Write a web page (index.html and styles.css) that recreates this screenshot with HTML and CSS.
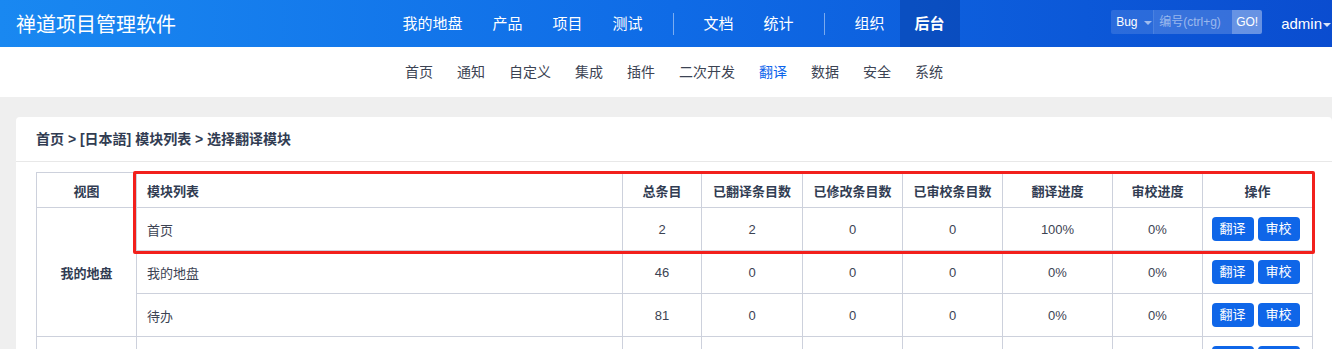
FILE: index.html
```html
<!DOCTYPE html>
<html lang="zh-CN">
<head>
  <meta charset="UTF-8" />
  <meta name="viewport" content="width=device-width, initial-scale=1.0"/>
  <title>翻译 - 禅道项目管理软件</title>
  <link rel="stylesheet" href="styles.css">
</head>
<body>
  <header class="topbar">
    <div class="logo">禅道项目管理软件</div>
    <nav class="mainnav">
      <a href="#">我的地盘</a>
      <a href="#">产品</a>
      <a href="#">项目</a>
      <a href="#">测试</a>
      <span class="divider"></span>
      <a href="#">文档</a>
      <a href="#">统计</a>
      <span class="divider"></span>
      <a href="#">组织</a>
      <a href="#" class="active">后台</a>
    </nav>
    <div class="userbar">
      <div class="search">
        <span class="search-type">Bug<i class="caret"></i></span>
        <span class="search-input">编号(ctrl+g)</span>
        <span class="search-go">GO!</span>
      </div>
      <span class="user">admin<i class="caret"></i></span>
    </div>
  </header>

  <nav class="subnav">
    <a href="#">首页</a>
    <a href="#">通知</a>
    <a href="#">自定义</a>
    <a href="#">集成</a>
    <a href="#">插件</a>
    <a href="#">二次开发</a>
    <a href="#" class="active">翻译</a>
    <a href="#">数据</a>
    <a href="#">安全</a>
    <a href="#">系统</a>
  </nav>

  <main class="content">
    <div class="panel">
      <div class="panel-heading">首页 &gt; [日本語] 模块列表 &gt; 选择翻译模块</div>
      <div class="panel-body">
        <table class="grid">
          <colgroup>
            <col style="width:100px">
            <col style="width:486px">
            <col style="width:79px">
            <col style="width:101px">
            <col style="width:100px">
            <col style="width:100px">
            <col style="width:110px">
            <col style="width:90px">
            <col style="width:110px">
          </colgroup>
          <thead>
            <tr>
              <th>视图</th>
              <th class="left">模块列表</th>
              <th>总条目</th>
              <th>已翻译条目数</th>
              <th>已修改条目数</th>
              <th>已审校条目数</th>
              <th>翻译进度</th>
              <th>审校进度</th>
              <th>操作</th>
            </tr>
          </thead>
          <tbody>
            <tr>
              <th rowspan="3">我的地盘</th>
              <td class="left">首页</td>
              <td>2</td><td>2</td><td>0</td><td>0</td><td>100%</td><td>0%</td>
              <td class="actions"><a href="#" class="btn">翻译</a><a href="#" class="btn">审校</a></td>
            </tr>
            <tr>
              <td class="left">我的地盘</td>
              <td>46</td><td>0</td><td>0</td><td>0</td><td>0%</td><td>0%</td>
              <td class="actions"><a href="#" class="btn">翻译</a><a href="#" class="btn">审校</a></td>
            </tr>
            <tr>
              <td class="left">待办</td>
              <td>81</td><td>0</td><td>0</td><td>0</td><td>0%</td><td>0%</td>
              <td class="actions"><a href="#" class="btn">翻译</a><a href="#" class="btn">审校</a></td>
            </tr>
            <tr>
              <th>产品</th>
              <td class="left">产品</td>
              <td>120</td><td>0</td><td>0</td><td>0</td><td>0%</td><td>0%</td>
              <td class="actions"><a href="#" class="btn">翻译</a><a href="#" class="btn">审校</a></td>
            </tr>
          </tbody>
        </table>
      </div>
    </div>
  </main>

  <div class="highlight"></div>
</body>
</html>
```

FILE: styles.css
```css
html {
  overflow: hidden;
}

body {
  position: relative;
  width: 1348px;
  margin: 0;
  background: #efefef;
  color: #3c4353;
  font-family: "Liberation Sans", "Noto Sans CJK SC", sans-serif;
  font-size: 13px;
}

a {
  text-decoration: none;
  color: inherit;
}

/* top bar */
.topbar {
  display: flex;
  align-items: center;
  height: 47px;
  background: linear-gradient(90deg, #1988f1 0%, #0f6be6 50%, #0a4ccf 100%);
  color: #fff;
}

.logo {
  flex: 1 1 0;
  padding-left: 16px;
  font-size: 20px;
  white-space: nowrap;
}

.mainnav {
  display: flex;
  align-items: center;
  height: 47px;
}

.mainnav a {
  padding: 0 15px;
  line-height: 47px;
  font-size: 15px;
}

.mainnav a.active {
  background: rgba(0, 20, 90, 0.22);
  font-weight: bold;
}

.mainnav .divider {
  width: 1px;
  height: 22px;
  margin: 0 15px;
  background: rgba(255, 255, 255, 0.45);
}

.userbar {
  flex: 1 1 0;
  display: flex;
  align-items: center;
  justify-content: flex-end;
  padding-right: 17px;
}

.search {
  display: flex;
  height: 24px;
  margin-bottom: 3px;
  margin-right: 19px;
  border-radius: 2px;
  overflow: hidden;
  font-size: 12px;
  line-height: 24px;
  white-space: nowrap;
}

.search-type {
  width: 43px;
  padding-left: 5px;
  box-sizing: border-box;
  background: rgba(255, 255, 255, 0.13);
  border-right: 1px solid rgba(255, 255, 255, 0.15);
}

.search-type .caret {
  margin-left: 6px;
  border-top-color: rgba(255, 255, 255, 0.55);
}

.search-input {
  width: 78px;
  padding-left: 5px;
  box-sizing: border-box;
  background: rgba(255, 255, 255, 0.18);
  color: rgba(255, 255, 255, 0.5);
}

.search-go {
  width: 30px;
  text-align: center;
  background: rgba(255, 255, 255, 0.38);
}

.user {
  font-size: 15px;
  white-space: nowrap;
}

.caret {
  display: inline-block;
  width: 0;
  height: 0;
  vertical-align: middle;
  border-left: 4px solid transparent;
  border-right: 4px solid transparent;
  border-top: 4px solid rgba(255, 255, 255, 0.85);
}

.user .caret {
  margin-left: 1px;
}

/* second level nav */
.subnav {
  display: flex;
  justify-content: center;
  height: 50px;
  background: #fff;
}

.subnav a {
  padding: 0 12px;
  line-height: 50px;
  font-size: 14px;
  color: #3c4353;
}

.subnav a.active {
  color: #0c64eb;
}

/* content */
.content {
  padding: 20px 16px;
}

.panel {
  background: #fff;
  border-radius: 4px;
}

.panel-heading {
  height: 44px;
  padding-left: 20px;
  line-height: 44px;
  font-size: 14px;
  font-weight: bold;
  color: #313c52;
  border-bottom: 1px solid #e8e8e8;
}

.panel-body {
  padding: 10px 20px 20px;
}

.grid {
  width: 1276px;
  border-collapse: collapse;
  table-layout: fixed;
}

.grid th,
.grid td {
  border: 1px solid #cdd1dc;
  text-align: center;
  padding: 0 10px;
}

.grid thead th {
  height: 34px;
  font-weight: bold;
  color: #313c52;
}

.grid tbody th {
  font-weight: bold;
  color: #313c52;
}

.grid tbody td {
  height: 42px;
}

.grid .left {
  text-align: left;
}

.grid .actions {
  padding: 0 4px 0 0;
  white-space: nowrap;
}

.btn {
  display: inline-block;
  width: 42px;
  height: 24px;
  line-height: 24px;
  border-radius: 4px;
  background: #0f66e8;
  color: #fff;
  text-align: center;
  vertical-align: middle;
}

.btn + .btn {
  margin-left: 4px;
}

/* red annotation frame drawn over the first row */
.highlight {
  position: absolute;
  left: 133px;
  top: 171px;
  width: 1182px;
  height: 83px;
  box-sizing: border-box;
  border: 3px solid #f2201c;
  border-radius: 2px;
  pointer-events: none;
}
```
